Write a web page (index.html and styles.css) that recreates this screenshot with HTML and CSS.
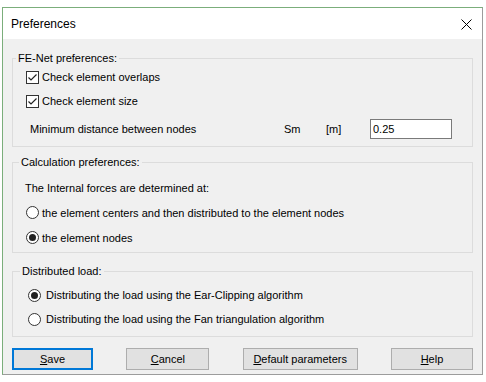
FILE: index.html
```html
<!DOCTYPE html>
<html>
<head>
    <title>Preferences</title>
    <link rel="stylesheet" href="styles.css">
</head>
<body>
    <div class="window">
        <div class="titlebar">
            <span class="title">Preferences</span>
            <svg class="close" width="11" height="11" viewBox="0 0 11 11">
                <path d="M0.5 0.5 L10.5 10.5 M10.5 0.5 L0.5 10.5" stroke="#000" stroke-width="1" fill="none"/>
            </svg>
        </div>

        <div class="content">
            <div class="group group-fenet">
                <div class="legend">FE-Net preferences:</div>
                <div class="row check-row">
                    <svg class="box" width="13" height="13" viewBox="0 0 13 13">
                        <rect x="0.5" y="0.5" width="12" height="12" fill="#fff" stroke="#333"/>
                        <path d="M2.5 6.5 L5 9 L10.5 3.5" stroke="#222" stroke-width="1.2" fill="none"/>
                    </svg>
                    <span>Check element overlaps</span>
                </div>
                <div class="row check-row">
                    <svg class="box" width="13" height="13" viewBox="0 0 13 13">
                        <rect x="0.5" y="0.5" width="12" height="12" fill="#fff" stroke="#333"/>
                        <path d="M2.5 6.5 L5 9 L10.5 3.5" stroke="#222" stroke-width="1.2" fill="none"/>
                    </svg>
                    <span>Check element size</span>
                </div>
                <div class="row distance-row">
                    <span class="dist-label">Minimum distance between nodes</span>
                    <span class="symbol">Sm</span>
                    <span class="unit">[m]</span>
                    <input class="field" type="text" value="0.25">
                </div>
            </div>

            <div class="group group-calc">
                <div class="legend">Calculation preferences:</div>
                <div class="row text-row">The Internal forces are determined at:</div>
                <div class="row radio-row">
                    <svg class="dot" width="13" height="13" viewBox="0 0 13 13">
                        <circle cx="6.5" cy="6.5" r="6" fill="#fff" stroke="#333"/>
                    </svg>
                    <span>the element centers and then distributed to the element nodes</span>
                </div>
                <div class="row radio-row">
                    <svg class="dot" width="13" height="13" viewBox="0 0 13 13">
                        <circle cx="6.5" cy="6.5" r="6" fill="#fff" stroke="#333"/>
                        <circle cx="6.5" cy="6.5" r="3.5" fill="#222"/>
                    </svg>
                    <span>the element nodes</span>
                </div>
            </div>

            <div class="group group-load">
                <div class="legend">Distributed load:</div>
                <div class="row radio-row">
                    <svg class="dot" width="13" height="13" viewBox="0 0 13 13">
                        <circle cx="6.5" cy="6.5" r="6" fill="#fff" stroke="#333"/>
                        <circle cx="6.5" cy="6.5" r="3.5" fill="#222"/>
                    </svg>
                    <span>Distributing the load using the Ear-Clipping algorithm</span>
                </div>
                <div class="row radio-row">
                    <svg class="dot" width="13" height="13" viewBox="0 0 13 13">
                        <circle cx="6.5" cy="6.5" r="6" fill="#fff" stroke="#333"/>
                    </svg>
                    <span>Distributing the load using the Fan triangulation algorithm</span>
                </div>
            </div>

            <div class="buttons">
                <button class="btn btn-default"><u>S</u>ave</button>
                <button class="btn btn-cancel"><u>C</u>ancel</button>
                <button class="btn btn-params"><u>D</u>efault parameters</button>
                <button class="btn btn-help"><u>H</u>elp</button>
            </div>
        </div>
    </div>
</body>
</html>
```

FILE: styles.css
```css
body {
    margin: 0;
    background-color: #ffffff;
    font-family: "Liberation Sans", Arial, sans-serif;
    font-size: 11px;
    color: #000000;
}
.window {
    margin: 7px 0 0 2px;
    width: 479px;
    border: 1px solid #9c9c9c;
    border-top-color: #7bae7b;
    border-left-color: #7bae7b;
}
.titlebar {
    height: 31px;
    background-color: #ffffff;
    display: flex;
    align-items: center;
    justify-content: space-between;
    padding: 0 10px 0 8px;
}
.title {
    font-size: 12px;
}
.close {
    display: block;
    margin-top: 1px;
}
.content {
    background-color: #f0f0f0;
    padding: 19px 9px 4px 9px;
}
.group {
    border: 1px solid #dcdcdc;
}
.legend {
    width: fit-content;
    margin: -7px 0 0 4px;
    padding: 0 2px;
    line-height: 13px;
    background-color: #f0f0f0;
}
.row {
    display: flex;
    align-items: center;
    height: 24px;
}
.box, .dot {
    display: block;
    flex: none;
}
.group-fenet {
    padding-bottom: 5px;
}
.group-fenet .legend {
    margin-left: 3px;
}
.group-fenet .check-row {
    padding-left: 13px;
    gap: 3px;
}
.group-fenet .check-row:first-of-type {
    margin-top: 6px;
}
.distance-row {
    margin-top: 4px;
    padding-left: 17px;
}
.dist-label {
    width: 254px;
}
.symbol {
    width: 42px;
}
.unit {
    width: 44px;
}
.field {
    width: 82px;
    height: 20px;
    box-sizing: border-box;
    border: 1px solid #7a7a7a;
    background-color: #ffffff;
    font-family: "Liberation Sans", Arial, sans-serif;
    font-size: 11px;
    padding: 0 2px;
    margin: 0;
}
.group-calc {
    margin-top: 15px;
    padding-bottom: 2px;
}
.group-calc .legend {
    margin-left: 6px;
}
.text-row {
    margin-top: 7px;
    padding-left: 12px;
}
.group-calc .radio-row {
    height: 25px;
    padding-left: 13px;
    gap: 3px;
}
.group-load {
    margin-top: 18px;
    padding-bottom: 5px;
}
.group-load .legend {
    margin-left: 7px;
}
.group-load .radio-row {
    padding-left: 15px;
    gap: 5px;
}
.group-load .radio-row:nth-of-type(2) {
    margin-top: 5px;
}
.buttons {
    display: flex;
    justify-content: space-between;
    margin-top: 11px;
}
.btn {
    height: 22px;
    background-color: #e1e1e1;
    border: 1px solid #adadad;
    font-family: "Liberation Sans", Arial, sans-serif;
    font-size: 11px;
    color: #000000;
    padding: 0;
    margin: 0;
}
.btn-default {
    width: 81px;
    border: 2px solid #0078d7;
}
.btn-cancel {
    width: 83px;
}
.btn-params {
    width: 115px;
}
.btn-help {
    width: 82px;
}
```
